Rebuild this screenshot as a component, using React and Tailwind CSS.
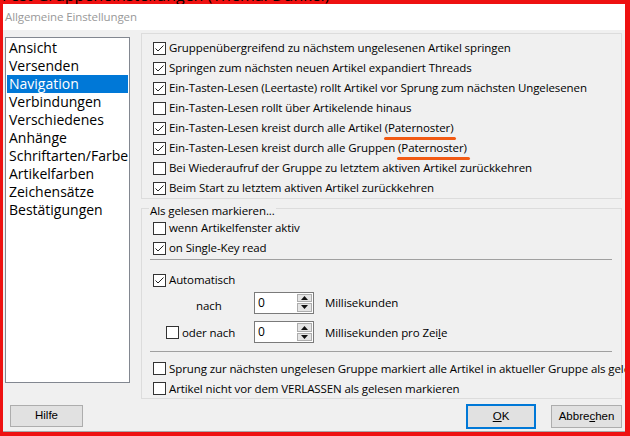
import React from "react";

const UI = "font-['Segoe_UI','Open_Sans',sans-serif]";

function Box({ checked }) {
  return (
    <span className="w-[13px] h-[13px] border border-[#333333] bg-white flex items-center justify-center shrink-0">
      {checked && (
        <svg width="11" height="11" viewBox="0 0 11 11">
          <path d="M1.5 5.5 L4 8 L9.5 2.5" fill="none" stroke="#222222" strokeWidth="1" />
        </svg>
      )}
    </span>
  );
}

function Row({ checked, children }) {
  return (
    <div className="h-[20px] flex items-center gap-[3px] whitespace-nowrap">
      <Box checked={checked} />
      <span className="text-[11.5px] tracking-[-0.1px] text-black leading-none">{children}</span>
    </div>
  );
}

function Marked({ children }) {
  return (
    <span className="relative">
      {children}
      <span className="absolute -left-[1px] -right-[3px] -bottom-[5px] h-[3px] rounded-full bg-[#f25a14]" />
    </span>
  );
}

function Spin() {
  return (
    <div className="w-[60px] h-[22px] border border-[#7a7a7a] bg-white flex shrink-0">
      <span className="flex-1 pl-[3px] text-[12px] leading-[20px] text-black">0</span>
      <div className="w-[15px] my-[1px] mr-[1px] flex flex-col gap-[1px]">
        <div className="flex-1 bg-[#e5e5e5] border border-[#adadad] flex items-center justify-center">
          <svg width="7" height="4" viewBox="0 0 7 4"><path d="M0 4 L3.5 0 L7 4 Z" fill="#111111" /></svg>
        </div>
        <div className="flex-1 bg-[#e5e5e5] border border-[#adadad] flex items-center justify-center">
          <svg width="7" height="4" viewBox="0 0 7 4"><path d="M0 0 L7 0 L3.5 4 Z" fill="#111111" /></svg>
        </div>
      </div>
    </div>
  );
}

const pages = [
  "Ansicht",
  "Versenden",
  "Navigation",
  "Verbindungen",
  "Verschiedenes",
  "Anhänge",
  "Schriftarten/Farbe",
  "Artikelfarben",
  "Zeichensätze",
  "Bestätigungen",
];

export default function App() {
  return (
    <div className={`w-[630px] h-[436px] bg-[#ee1111] overflow-hidden flex flex-col ${UI}`}>
      {/* Rest des Hauptfenster-Titels hinter dem Dialog */}
      <div className="h-[4px] overflow-hidden pl-[2px]">
        <div className="-mt-[13px] text-[16px] leading-[16px] text-black whitespace-nowrap">
          Fest Gruppeneinstellungen (Thema: Dunkel)
        </div>
      </div>

      <div className="flex-1 ml-[3px] mr-[5px] mb-[4px] flex flex-col overflow-hidden">
        {/* Titelleiste */}
        <div className="h-[26px] bg-white flex items-center pl-[2px]">
          <span className="text-[11.5px] tracking-[-0.1px] text-[#999999]">Allgemeine Einstellungen</span>
        </div>

        <div className="flex-1 bg-[#f0f0f0] border-b border-[#a8a8a8] flex flex-col">
          <div className="flex items-start">
            {/* Seitenliste */}
            <div className="ml-[2px] mt-[7px] w-[125px] h-[346px] border border-[#828790] bg-white pt-[1px] px-[1px]">
              {pages.map((p) => (
                <div
                  key={p}
                  className={`h-[18px] pl-[2px] text-[14px] leading-[18px] whitespace-nowrap ${
                    p === "Navigation" ? "bg-[#0078d7] text-white" : "text-black"
                  }`}
                >
                  {p}
                </div>
              ))}
            </div>

            {/* Einstellungen */}
            <div className="ml-[11px] mt-[3px] w-[481px]">
              <div className="h-[166px] border border-[#dcdcdc] pt-[4px] pl-[11px]">
                <Row checked>Gruppenübergreifend zu nächstem ungelesenen Artikel springen</Row>
                <Row checked>Springen zum nächsten neuen Artikel expandiert Threads</Row>
                <Row checked>Ein-Tasten-Lesen (Leertaste) rollt Artikel vor Sprung zum nächsten Ungelesenen</Row>
                <Row>Ein-Tasten-Lesen rollt über Artikelende hinaus</Row>
                <Row checked>
                  Ein-Tasten-Lesen kreist durch alle Artikel <Marked>(Paternoster)</Marked>
                </Row>
                <Row checked>
                  Ein-Tasten-Lesen kreist durch alle Gruppen <Marked>(Paternoster)</Marked>
                </Row>
                <Row>Bei Wiederaufruf der Gruppe zu letztem aktiven Artikel zurückkehren</Row>
                <Row checked>Beim Start zu letztem aktiven Artikel zurückkehren</Row>
              </div>

              <div className="relative mt-[9px] h-[191px] border border-[#dcdcdc] pt-[9px]">
                <span className="absolute left-[7px] -top-[6px] px-[1px] bg-[#f0f0f0] text-[11.5px] tracking-[-0.1px] leading-[16px] text-black">
                  Als gelesen markieren...
                </span>
                <div className="pl-[11px]">
                  <Row>wenn Artikelfenster aktiv</Row>
                  <Row checked>on Single-Key read</Row>
                </div>
                <div className="ml-[8px] mt-[1px] w-[462px] h-px bg-[#a0a0a0]" />
                <div className="pl-[11px] mt-[10px]">
                  <Row checked>Automatisch</Row>
                </div>
                <div className="mt-[1px] flex items-center text-[11.5px] tracking-[-0.1px] text-black">
                  <div className="w-[112px] pl-[54px] pt-[6px]">nach</div>
                  <Spin />
                  <span className="ml-[11px]">Millisekunden</span>
                </div>
                <div className="mt-[7px] flex items-center text-[11.5px] tracking-[-0.1px] text-black">
                  <div className="w-[112px] pl-[24px] flex items-center gap-[3px]">
                    <Box />
                    <span>oder nach</span>
                  </div>
                  <Spin />
                  <span className="ml-[11px]">
                    Millisekunden pro Zei<u>l</u>e
                  </span>
                </div>
                <div className="ml-[8px] mt-[8px] w-[462px] h-px bg-[#a0a0a0]" />
                <div className="pl-[11px] mt-[6px]">
                  <Row>Sprung zur nächsten ungelesen Gruppe markiert alle Artikel in aktueller Gruppe als gelesen markieren</Row>
                  <Row>Artikel nicht vor dem VERLASSEN als gelesen markieren</Row>
                </div>
              </div>
            </div>
          </div>

          {/* Schaltflächen */}
          <div className="mt-[5px] flex items-start pl-[7px] pr-[3px] font-['Liberation_Sans',sans-serif] text-[11.5px] text-black">
            <button className="mt-[1px] w-[73px] h-[22px] bg-[#e1e1e1] border border-[#adadad]">Hilfe</button>
            <div className="flex-1" />
            <button className="w-[70px] h-[25px] bg-[#e1e1e1] border-2 border-[#0078d7]">
              <u>O</u>K
            </button>
            <button className="ml-[15px] mt-[1px] w-[71px] h-[23px] bg-[#e1e1e1] border border-[#adadad]">
              Abbre<u>c</u>hen
            </button>
          </div>
        </div>
      </div>
    </div>
  );
}
